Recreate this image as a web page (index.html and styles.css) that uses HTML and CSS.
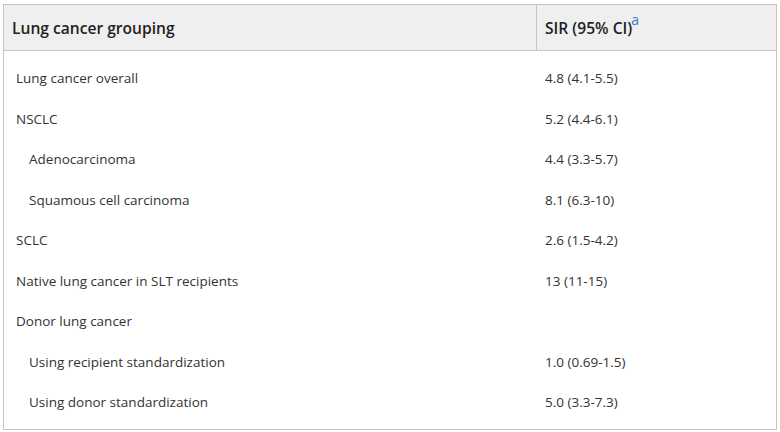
FILE: index.html
```html
<!DOCTYPE html>
<html>
<head>
<meta charset="utf-8">
<link rel="stylesheet" href="styles.css">
</head>
<body>
<div class="tbl">
  <div class="head">
    <div class="hcell first">Lung cancer grouping</div>
    <div class="hcell second">SIR (95% CI)<sup class="fn">a</sup></div>
  </div>
  <div class="body">
    <div class="row"><div class="c1">Lung cancer overall</div><div class="c2">4.8 (4.1-5.5)</div></div>
    <div class="row"><div class="c1">NSCLC</div><div class="c2">5.2 (4.4-6.1)</div></div>
    <div class="row"><div class="c1 ind">Adenocarcinoma</div><div class="c2">4.4 (3.3-5.7)</div></div>
    <div class="row"><div class="c1 ind">Squamous cell carcinoma</div><div class="c2">8.1 (6.3-10)</div></div>
    <div class="row"><div class="c1">SCLC</div><div class="c2">2.6 (1.5-4.2)</div></div>
    <div class="row"><div class="c1">Native lung cancer in SLT recipients</div><div class="c2">13 (11-15)</div></div>
    <div class="row"><div class="c1">Donor lung cancer</div><div class="c2"></div></div>
    <div class="row"><div class="c1 ind">Using recipient standardization</div><div class="c2">1.0 (0.69-1.5)</div></div>
    <div class="row"><div class="c1 ind">Using donor standardization</div><div class="c2">5.0 (3.3-7.3)</div></div>
  </div>
</div>
</body>
</html>
```
FILE: styles.css
```css
html, body {
  margin: 0;
  padding: 0;
  background: #ffffff;
}
body {
  padding: 4px 0 0 3px;
  font-family: "Open Sans", "Liberation Sans", sans-serif;
  color: #333333;
}
.tbl {
  width: 772px;
  height: 424px;
  border: 1px solid #c4c4c4;
  display: flex;
  flex-direction: column;
}
.head {
  display: grid;
  grid-template-columns: 532px 1fr;
  background: #efefef;
  border-bottom: 1px solid #c4c4c4;
  height: 45px;
}
.hcell {
  display: flex;
  align-items: center;
  padding-left: 8px;
  font-size: 15.6px;
  font-weight: 600;
  color: #222222;
}
.hcell.second {
  border-left: 1px solid #c4c4c4;
}
.fn {
  color: #3b7cc4;
  font-size: 14px;
  font-weight: 500;
  position: relative;
  top: -8px;
  vertical-align: baseline;
  margin-left: -1px;
}
.body {
  padding-top: 7px;
}
.row {
  display: grid;
  grid-template-columns: 533px 1fr;
  height: 40.5px;
  align-items: center;
  font-size: 13.5px;
  color: #333333;
}
.c1 {
  padding-left: 12px;
}
.c1.ind {
  padding-left: 25px;
}
.c2 {
  padding-left: 8px;
}
```
